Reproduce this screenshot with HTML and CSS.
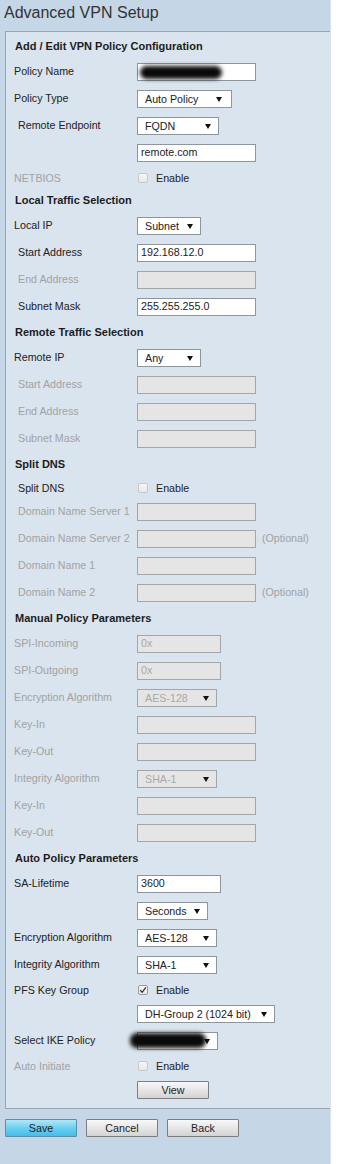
FILE: index.html
```html
<!DOCTYPE html>
<html lang="en">
<head>
<meta charset="utf-8">
<title>Advanced VPN Setup</title>
<link rel="stylesheet" href="styles.css">
</head>
<body>
<div class="page">
  <h1 class="title">Advanced VPN Setup</h1>
  <div class="panel">
    <div class="sec">Add / Edit VPN Policy Configuration</div>
    <div class="row"><span class="lbl">Policy Name</span><span class="inp"><span class="blob"></span></span></div>
    <div class="row"><span class="lbl">Policy Type</span><span class="sel w95 pr9"><span>Auto Policy</span><svg class="arr" width="6" height="5" viewBox="0 0 6 5"><polygon points="0,0 6,0 3,5"/></svg></span></div>
    <div class="row"><span class="lbl ind">Remote Endpoint</span><span class="sel w82"><span>FQDN</span><svg class="arr" width="6" height="5" viewBox="0 0 6 5"><polygon points="0,0 6,0 3,5"/></svg></span></div>
    <div class="row"><span class="lbl"></span><span class="inp">remote.com</span></div>
    <div class="row chk"><span class="lbl dis">NETBIOS</span><span class="box"></span><span class="cbt">Enable</span></div>

    <div class="sec">Local Traffic Selection</div>
    <div class="row"><span class="lbl">Local IP</span><span class="sel w64"><span>Subnet</span><svg class="arr" width="6" height="5" viewBox="0 0 6 5"><polygon points="0,0 6,0 3,5"/></svg></span></div>
    <div class="row"><span class="lbl ind">Start Address</span><span class="inp">192.168.12.0</span></div>
    <div class="row"><span class="lbl ind dis">End Address</span><span class="inp off"></span></div>
    <div class="row"><span class="lbl ind">Subnet Mask</span><span class="inp">255.255.255.0</span></div>

    <div class="sec">Remote Traffic Selection</div>
    <div class="row"><span class="lbl">Remote IP</span><span class="sel w64"><span>Any</span><svg class="arr" width="6" height="5" viewBox="0 0 6 5"><polygon points="0,0 6,0 3,5"/></svg></span></div>
    <div class="row"><span class="lbl ind dis">Start Address</span><span class="inp off"></span></div>
    <div class="row"><span class="lbl ind dis">End Address</span><span class="inp off"></span></div>
    <div class="row"><span class="lbl ind dis">Subnet Mask</span><span class="inp off"></span></div>

    <div class="sec">Split DNS</div>
    <div class="row chk"><span class="lbl ind">Split DNS</span><span class="box"></span><span class="cbt">Enable</span></div>
    <div class="row"><span class="lbl ind dis">Domain Name Server 1</span><span class="inp off"></span></div>
    <div class="row"><span class="lbl ind dis">Domain Name Server 2</span><span class="inp off"></span><span class="opt">(Optional)</span></div>
    <div class="row"><span class="lbl ind dis">Domain Name 1</span><span class="inp off"></span></div>
    <div class="row"><span class="lbl ind dis">Domain Name 2</span><span class="inp off"></span><span class="opt">(Optional)</span></div>

    <div class="sec">Manual Policy Parameters</div>
    <div class="row"><span class="lbl dis">SPI-Incoming</span><span class="inp off w84">0x</span></div>
    <div class="row"><span class="lbl dis">SPI-Outgoing</span><span class="inp off w84">0x</span></div>
    <div class="row"><span class="lbl dis">Encryption Algorithm</span><span class="sel off w80"><span>AES-128</span><svg class="arr" width="6" height="5" viewBox="0 0 6 5"><polygon points="0,0 6,0 3,5"/></svg></span></div>
    <div class="row"><span class="lbl dis">Key-In</span><span class="inp off"></span></div>
    <div class="row"><span class="lbl dis">Key-Out</span><span class="inp off"></span></div>
    <div class="row"><span class="lbl dis">Integrity Algorithm</span><span class="sel off w80"><span>SHA-1</span><svg class="arr" width="6" height="5" viewBox="0 0 6 5"><polygon points="0,0 6,0 3,5"/></svg></span></div>
    <div class="row"><span class="lbl dis">Key-In</span><span class="inp off"></span></div>
    <div class="row"><span class="lbl dis">Key-Out</span><span class="inp off"></span></div>

    <div class="sec">Auto Policy Parameters</div>
    <div class="row"><span class="lbl">SA-Lifetime</span><span class="inp w84">3600</span></div>
    <div class="row"><span class="lbl"></span><span class="sel w71"><span>Seconds</span><svg class="arr" width="6" height="5" viewBox="0 0 6 5"><polygon points="0,0 6,0 3,5"/></svg></span></div>
    <div class="row"><span class="lbl">Encryption Algorithm</span><span class="sel w80"><span>AES-128</span><svg class="arr" width="6" height="5" viewBox="0 0 6 5"><polygon points="0,0 6,0 3,5"/></svg></span></div>
    <div class="row"><span class="lbl">Integrity Algorithm</span><span class="sel w80"><span>SHA-1</span><svg class="arr" width="6" height="5" viewBox="0 0 6 5"><polygon points="0,0 6,0 3,5"/></svg></span></div>
    <div class="row chk"><span class="lbl">PFS Key Group</span><span class="box on"><svg width="8" height="8" viewBox="0 0 8 8"><path d="M1.2 4.2 L3.2 6.3 L6.8 1.4" fill="none" stroke="#333" stroke-width="1.3"/></svg></span><span class="cbt">Enable</span></div>
    <div class="row"><span class="lbl"></span><span class="sel w138"><span>DH-Group 2 (1024 bit)</span><svg class="arr" width="6" height="5" viewBox="0 0 6 5"><polygon points="0,0 6,0 3,5"/></svg></span></div>
    <div class="row"><span class="lbl">Select IKE Policy</span><span class="sel w81"><span class="blob blob2"></span><svg class="arr" width="6" height="5" viewBox="0 0 6 5"><polygon points="0,0 6,0 3,5"/></svg></span></div>
    <div class="row chk"><span class="lbl dis">Auto Initiate</span><span class="box"></span><span class="cbt">Enable</span></div>
    <div class="row"><span class="lbl"></span><button class="btn" type="button">View</button></div>
  </div>
  <div class="actions">
    <button class="btn save" type="button">Save</button>
    <button class="btn" type="button">Cancel</button>
    <button class="btn" type="button">Back</button>
  </div>
</div>
</body>
</html>
```

FILE: styles.css
```css
* { box-sizing: border-box; }
html, body { margin: 0; padding: 0; background: #ffffff; }
body {
  font-family: "Liberation Sans", Arial, sans-serif;
  font-size: 10.7px;
  color: #222;
}
.page {
  width: 331px;
  min-height: 1164px;
  background: #c5d6e7;
  border-right: 1px solid #d9e1e9;
}
.title {
  margin: 0;
  padding: 4px 4px 9px;
  font-size: 16px;
  line-height: 18px;
  font-weight: normal;
  color: #333;
}
.panel {
  margin-left: 5px;
  background: #dae4ee;
  border: 1px solid #98a4b0;
  border-right: none;
  padding: 7px 0 0 8px;
}
.sec {
  height: 14px;
  line-height: 14px;
  font-size: 11px;
  font-weight: bold;
  color: #1c1c1c;
  margin-bottom: 10px;
  padding-left: 1px;
}
.row {
  display: flex;
  align-items: flex-start;
  height: 18px;
  margin-bottom: 9px;
}
.row.chk { height: 14px; margin-bottom: 8px; align-items: center; }
.lbl {
  flex: 0 0 123px;
  line-height: 16px;
  white-space: nowrap;
}
.chk .lbl { line-height: 14px; }
.ind { padding-left: 4px; }
.dis { color: #a2a2a2; }
.inp {
  position: relative;
  display: block;
  width: 119px;
  height: 18px;
  border: 1px solid #8d959d;
  background: #fff;
  padding: 0 3px;
  line-height: 15px;
  color: #222;
}
.inp.off {
  background: #e5e5e5;
  border-color: #a3a6a9;
  color: #a8a8a8;
}
.w84 { width: 84px; }
.sel {
  position: relative;
  display: flex;
  align-items: center;
  height: 18px;
  border: 1px solid #8d959d;
  background: #fff;
  padding: 0 7px;
  line-height: 15px;
  color: #222;
  white-space: nowrap;
}
.sel.off { background: #e5e5e5; border-color: #a3a6a9; color: #a8a8a8; }
.sel.pr9 { padding-right: 9px; }
.arr { margin-left: auto; flex: 0 0 auto; fill: #111; }
.w95 { width: 95px; }
.w82 { width: 82px; }
.w64 { width: 64px; }
.w80 { width: 80px; }
.w71 { width: 71px; }
.w81 { width: 81px; }
.w138 { width: 138px; }
.opt { margin-left: 6px; line-height: 16px; color: #a2a2a2; }
.box {
  display: flex;
  align-items: center;
  justify-content: center;
  width: 10px;
  height: 10px;
  margin-left: 1px;
  border: 1px solid #c6cacd;
  border-radius: 2px;
  background: linear-gradient(#f6f6f6, #e8e8e8);
}
.box.on { border-color: #9a9ea2; background: linear-gradient(#fafafa, #e6e6e6); }
.cbt { margin-left: 8px; line-height: 14px; color: #222; }
.blob {
  position: absolute;
  left: 2px;
  top: 2px;
  width: 82px;
  height: 13px;
  background: #0a0a0a;
  border-radius: 7px;
  filter: blur(2px);
}
.blob2 {
  left: -8px;
  top: 0;
  width: 76px;
  height: 15px;
}
.btn {
  display: block;
  flex: 0 0 72px;
  width: 72px;
  height: 18px;
  padding: 0;
  margin: 0;
  border: 1px solid #7e7e7e;
  border-radius: 1px;
  background: linear-gradient(#f8f8f8, #e6e6e6 50%, #d3d3d3);
  font-family: "Liberation Sans", Arial, sans-serif;
  font-size: 10.7px;
  line-height: 15px;
  color: #222;
  text-align: center;
}
.save {
  border-color: #5b8ea8;
  background: linear-gradient(#b2e7f8, #6ccff0 50%, #45bde8);
}
.actions {
  display: flex;
  gap: 9px;
  margin-top: 10px;
  padding-left: 5px;
}
```
